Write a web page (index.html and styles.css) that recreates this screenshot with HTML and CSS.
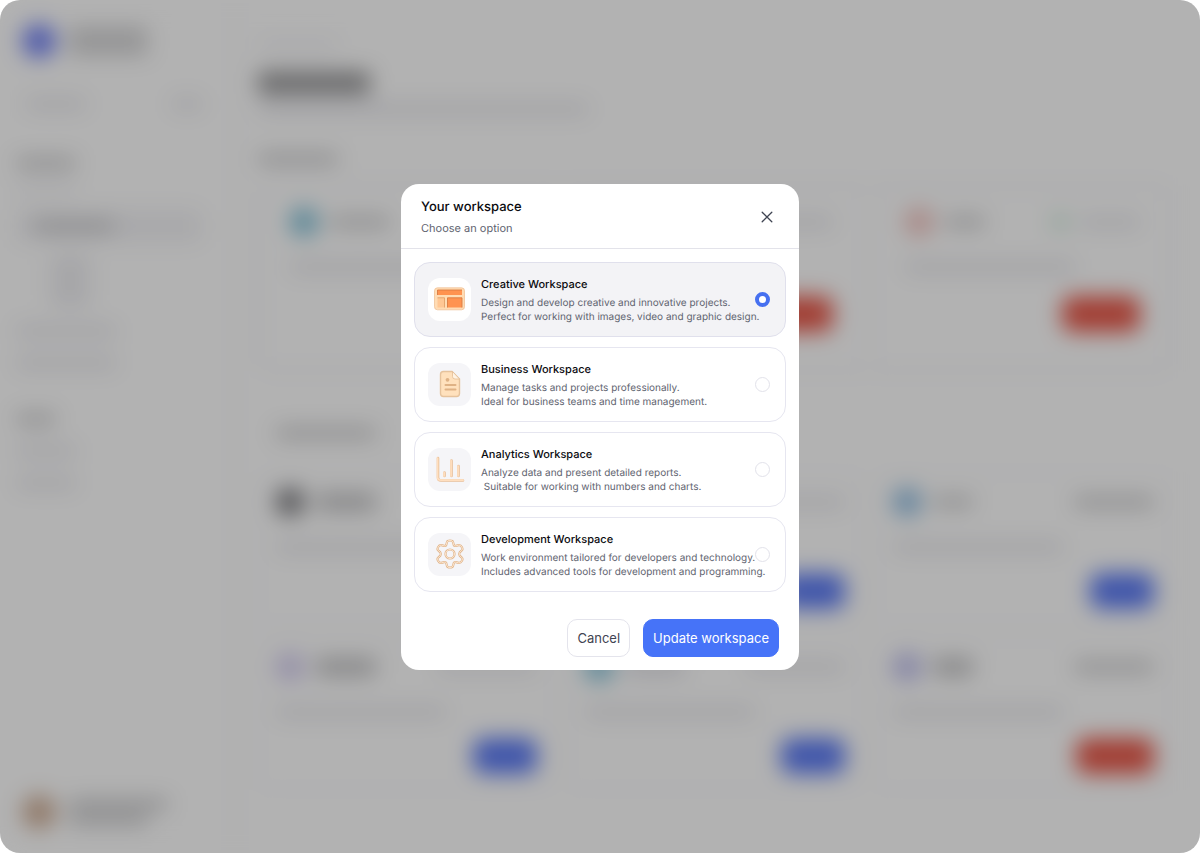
FILE: index.html
```html
<!DOCTYPE html>
<html lang="en">
<head>
<meta charset="utf-8">
<meta name="viewport" content="width=device-width, initial-scale=1">
<title>Your workspace</title>
<link rel="stylesheet" href="styles.css">
</head>
<body>
<div class="screen">
  <div class="app" aria-hidden="true">
    <aside class="side">
      <div class="row brand"><i class="dot blue"></i><div class="lines"><i class="bar dark w80"></i><i class="bar dark w80"></i></div></div>
      <div class="row search"><i class="bar mid w60"></i><i class="bar mid w30"></i></div>
      <div class="nav">
        <i class="bar dark w60"></i>
        <i class="bar soft w60"></i>
        <div class="row active"><i class="bar dark w80"></i></div>
        <div class="sub"><i class="bar mid w40"></i><i class="bar mid w40"></i><i class="bar mid w40"></i></div>
        <i class="bar mid w100"></i>
        <i class="bar mid w100"></i>
      </div>
      <div class="nav more">
        <i class="bar dark w40"></i>
        <i class="bar mid w60"></i>
        <i class="bar mid w60"></i>
      </div>
      <div class="row account"><i class="dot brown"></i><div class="lines"><i class="bar dark w100"></i><i class="bar dark w80"></i></div></div>
    </aside>
    <div class="main">
      <i class="bar soft w80"></i>
      <i class="heading"></i>
      <i class="bar mid w330"></i>
      <i class="bar dark section w80"></i>
      <div class="panel">
        <div class="card tall">
          <div class="row"><i class="chip cyan"></i><i class="bar dark w60"></i><i class="bar mid w80 end"></i></div>
          <i class="bar mid w170"></i><i class="btn red"></i>
        </div>
        <div class="card tall">
          <div class="row"><i class="chip cyan"></i><i class="bar dark w60"></i><i class="bar mid w80 end"></i></div>
          <i class="bar mid w170"></i><i class="btn red"></i>
        </div>
        <div class="card tall">
          <div class="row"><i class="chip rose"></i><i class="bar dark w40"></i><i class="tick end"></i><i class="bar mid w60"></i></div>
          <i class="bar mid w170"></i><i class="btn red"></i>
        </div>
      </div>
      <i class="bar dark tabs w100"></i>
      <div class="cards">
        <div class="card">
          <div class="row"><i class="chip black"></i><i class="bar dark thick w60"></i><i class="bar mid w100 end"></i></div>
          <i class="bar mid w170"></i><i class="btn blue"></i>
        </div>
        <div class="card">
          <div class="row"><i class="chip sky"></i><i class="bar dark thick w60"></i><i class="bar mid w100 end"></i></div>
          <i class="bar mid w170"></i><i class="btn blue"></i>
        </div>
        <div class="card">
          <div class="row"><i class="chip sky"></i><i class="bar dark w40"></i><i class="bar dark w80 end"></i></div>
          <i class="bar mid w170"></i><i class="btn blue"></i>
        </div>
        <div class="card">
          <div class="row"><i class="chip violet"></i><i class="bar dark thick w60"></i><i class="bar mid w100 end"></i></div>
          <i class="bar mid w170"></i><i class="btn blue"></i>
        </div>
        <div class="card">
          <div class="row"><i class="chip cyan"></i><i class="bar mid thick w60"></i><i class="bar mid w100 end"></i></div>
          <i class="bar mid w170"></i><i class="btn blue"></i>
        </div>
        <div class="card">
          <div class="row"><i class="chip indigo"></i><i class="bar dark thick w40"></i><i class="bar dark w80 end"></i></div>
          <i class="bar mid w170"></i><i class="btn red"></i>
        </div>
      </div>
    </div>
  </div>
  <div class="shade"></div>

  <form class="modal" role="dialog" aria-labelledby="modal-title">
    <header class="modal-head">
      <div>
        <h1 class="modal-title" id="modal-title">Your workspace</h1>
        <p class="modal-sub">Choose an option</p>
      </div>
      <button class="close" type="button" aria-label="Close">
        <svg width="12" height="12" viewBox="0 0 12 12" fill="none" stroke="currentColor" stroke-width="1.3" stroke-linecap="round"><path d="M1.2 1.2l9.6 9.6M10.8 1.2l-9.6 9.6"/></svg>
      </button>
    </header>

    <div class="options">
      <label class="option" for="creative">
        <span class="tile">
          <svg width="32" height="24" viewBox="0 0 32 24">
            <rect x=".5" y=".8" width="30" height="22" rx="3" fill="#ffdcb4" stroke="#f0c298" stroke-width=".8"/>
            <path d="M3.500 3H28V8H3.500z" fill="#ff9350"/>
            <path d="M3.500 8V3H28" fill="none" stroke="#d97b42" stroke-width=".9"/>
            <path d="M3.500 10.800H10.500V20.500H3.500z" fill="#ffc794"/>
            <path d="M3.500 10.800H10.500V20.500" fill="none" stroke="#e2a069" stroke-width=".9"/>
            <path d="M13.500 10.800H28V20.500H13.500z" fill="#ff9350"/>
            <path d="M13.500 20.500V10.800H28V20.500" fill="none" stroke="#d97b42" stroke-width=".9"/>
          </svg>
        </span>
        <span class="copy">
          <span class="name">Creative Workspace</span>
          <span class="desc">Design and develop creative and innovative projects.<br>Perfect for working with images, video and graphic design.</span>
        </span>
        <input class="radio" type="radio" name="workspace" id="creative" checked>
      </label>

      <label class="option" for="business">
        <span class="tile">
          <svg width="24" height="28" viewBox="0 0 24 28">
            <path d="M5.500 1.500H14L21.500 9V23.500Q21.500 26.500 18.500 26.500H5.500Q2.500 26.500 2.500 23.500V4.500Q2.500 1.500 5.500 1.500z" fill="#ffe1bd" stroke="#e6c39d" stroke-width="1.400"/>
            <path d="M14.500 1.500V6.500Q14.500 9 17 9H21.500z" fill="#fff3e3" stroke="#e3bd94" stroke-width=".8"/>
            <circle cx="9.500" cy="9.800" r="1.900" fill="#dfb285"/>
            <path d="M7.500 15H17.500M7.500 19.500H17.500" stroke="#dfb285" stroke-width="2" stroke-linecap="round"/>
          </svg>
        </span>
        <span class="copy">
          <span class="name">Business Workspace</span>
          <span class="desc">Manage tasks and projects professionally.<br>Ideal for business teams and time management.</span>
        </span>
        <input class="radio" type="radio" name="workspace" id="business">
      </label>

      <label class="option" for="analytics">
        <span class="tile">
          <svg width="30" height="28" viewBox="0 0 30 28" fill="none" stroke-linecap="round" stroke-linejoin="round">
            <path d="M3 3V22.500Q3 25.500 6 25.500H28M9.500 21V17.500M16.500 21V5.500M23.500 21V11" stroke="#e8bf98" stroke-width="2.600"/>
            <path d="M2.600 3V22.500Q2.600 25.200 6 25.200H28M9.100 21V17.500M16.100 21V5.500M23.100 21V11" stroke="#ffdfc0" stroke-width="1.700"/>
          </svg>
        </span>
        <span class="copy">
          <span class="name">Analytics Workspace</span>
          <span class="desc">Analyze data and present detailed reports.<br>&nbsp;Suitable for working with numbers and charts.</span>
        </span>
        <input class="radio" type="radio" name="workspace" id="analytics">
      </label>

      <label class="option" for="development">
        <span class="tile">
          <svg width="30" height="30" viewBox="0 0 30 30" fill="none" stroke-linejoin="round">
            <g stroke="#dfb48b" stroke-width="2.200">
              <path id="gear" d="M12 3Q12.300 1.500 15 1.500T18 3L18.800 6Q19.300 7.300 20.800 6.900L23.700 6.100Q25.500 5.700 26.800 8T26.900 11.200L24.700 13.400Q23.500 15 24.700 16.600L26.900 18.800Q28.100 19.800 26.800 22T23.700 23.900L20.800 23.100Q19.300 22.700 18.800 24L18 27Q17.700 28.500 15 28.500T12 27L11.200 24Q10.700 22.700 9.200 23.100L6.300 23.900Q4.500 24.300 3.200 22T3.100 18.800L5.300 16.600Q6.500 15 5.300 13.400L3.100 11.200Q1.900 10.200 3.200 8T6.300 6.100L9.200 6.900Q10.700 7.300 11.200 6z"/>
              <circle cx="15" cy="15" r="4.500"/>
            </g>
            <g stroke="#ffebd6" stroke-width=".9">
              <use href="#gear"/>
              <circle cx="15" cy="15" r="4.500"/>
            </g>
          </svg>
        </span>
        <span class="copy">
          <span class="name">Development Workspace</span>
          <span class="desc">Work environment tailored for developers and technology.<br>Includes advanced tools for development and programming.</span>
        </span>
        <input class="radio" type="radio" name="workspace" id="development">
      </label>
    </div>

    <footer class="actions">
      <button class="button" type="button">Cancel</button>
      <button class="button primary" type="submit">Update workspace</button>
    </footer>
  </form>
</div>
</body>
</html>
```
FILE: styles.css
```css
* { box-sizing: border-box; }
body {
  margin: 0;
  background: #fff;
  font-family: Inter, "Liberation Sans", sans-serif;
  text-rendering: geometricPrecision;
}
h1, p { margin: 0; }

.screen {
  display: grid;
  min-height: 100vh;
  border-radius: 20px;
  overflow: hidden;
}
.app, .shade, .modal { grid-area: 1 / 1; }
.shade { background: rgba(0, 0, 0, .3); z-index: 1; }

/* Blurred page behind the dialog */
.app {
  display: grid;
  grid-template-columns: 236px 1fr;
  background: #fff;
  filter: blur(11px);
}
.app i { display: block; flex: none; }
.row { display: flex; align-items: center; gap: 12px; }
.lines { display: flex; flex-direction: column; gap: 6px; }
.bar { height: 10px; border-radius: 4px; }
.thick { height: 18px; }
.soft { background: #f0f0f4; }
.mid { background: #e2e2e8; }
.dark { background: #c2c2c4; }
.w30 { width: 30px; }
.w40 { width: 40px; }
.w60 { width: 60px; }
.w80 { width: 80px; }
.w100 { width: 100px; }
.w170 { width: 170px; }
.w330 { width: 330px; }
.end { margin-left: auto; }

.side {
  display: flex;
  flex-direction: column;
  padding: 24px 32px 24px 16px;
  border-right: 2px solid #f0f0f6;
}
.dot { width: 34px; height: 34px; border-radius: 50%; margin-left: 6px; }
.dot.blue { background: #7080f4; }
.dot.brown { background: #cfae96; }
.search { justify-content: space-between; height: 36px; margin-top: 28px; padding-left: 10px; }
.nav { display: flex; flex-direction: column; gap: 16px; margin-top: 36px; }
.active { height: 32px; padding-left: 18px; border-radius: 8px; background: #f2f2f5; }
.sub { display: flex; flex-direction: column; gap: 8px; padding-left: 34px; }
.nav > .w100 { margin-top: 6px; }
.more { gap: 22px; margin-top: 46px; }
.account { margin-top: auto; }

.main { padding: 40px 28px 0 22px; }
.heading { width: 112px; height: 22px; margin: 22px 0 10px; border-radius: 4px; background: #949496; }
.section { margin: 40px 0 20px; }
.panel, .cards { display: grid; grid-template-columns: repeat(3, 1fr); gap: 12px; }
.panel { border: 2px solid #f2f2f8; border-radius: 16px; }
.tabs { margin: 56px 0 34px 18px; }
.card { display: flex; flex-direction: column; height: 153px; padding: 14px 16px; border: 2px solid #f5f5fa; border-radius: 14px; }
.card > .bar { margin-top: 26px; }
.tall { height: 184px; padding: 20px 28px 36px; }
.chip, .tick { width: 28px; height: 28px; border-radius: 10px; }
.tick { width: 16px; height: 16px; background: #c3e6d2; }
.cyan { background: #85c3da; }
.sky { background: #93bfe3; }
.rose { background: #f3c6c2; }
.black { background: #808084; }
.violet { background: #d6cff2; }
.indigo { background: #c0c0ee; }
.btn { width: 64px; height: 36px; margin: auto 0 0 auto; border-radius: 10px; }
.btn.red { width: 78px; background: #e8594a; }
.btn.blue { background: #5c7bf4; }

/* Dialog */
.modal {
  z-index: 2;
  place-self: center;
  width: min(398px, 100%);
  border-radius: 18px;
  background: #fff;
}
.modal-head {
  display: flex;
  align-items: center;
  justify-content: space-between;
  padding: 13px 19px 11px 20px;
  border-bottom: 1px solid #e3e3ea;
}
.modal-title { font-size: 13px; line-height: 20px; font-weight: 500; color: #0b0b0f; }
.modal-sub { margin-top: 2px; font-size: 11px; line-height: 18px; color: #5f6470; }
.close {
  display: grid;
  place-items: center;
  width: 26px;
  height: 26px;
  padding: 0;
  border: 0;
  background: none;
  color: #3f4452;
}
.options { display: flex; flex-direction: column; gap: 10px; padding: 13px 13px 0; }
.option {
  display: flex;
  align-items: center;
  gap: 10px;
  min-height: 75px;
  padding: 0 15px 0 13px;
  border: 1px solid #e6e6f0;
  border-radius: 16px;
}
.option:has(:checked) { background: #f3f3f6; border-color: #e0e0ec; }
.tile {
  display: grid;
  place-items: center;
  flex: none;
  width: 43px;
  height: 43px;
  border-radius: 12px;
  background: #f5f5f8;
}
.option:has(:checked) .tile { background: #fff; }
.copy { flex: 1; min-width: 0; white-space: nowrap; }
.name { display: block; margin-bottom: 3px; font-size: 11px; line-height: 18px; font-weight: 500; color: #0b0b0f; }
.desc { display: block; font-size: 10px; line-height: 14px; color: #5f6470; }
.radio {
  appearance: none;
  flex: none;
  width: 15px;
  height: 15px;
  margin: 0;
  border: 1px solid #e2e2ea;
  border-radius: 50%;
  background: #fff;
}
.radio:checked { border: 4px solid #4670f0; }
.actions { display: flex; justify-content: flex-end; gap: 13px; padding: 27px 20px 13px; }
.button {
  height: 38px;
  padding: 0 9px;
  border: 1px solid #e4e4ec;
  border-radius: 10px;
  background: #fff;
  font: 400 13px/20px Inter, "Liberation Sans", sans-serif;
  color: #3f4452;
}
.primary { border-color: #4673f8; background: #4673f8; color: #fff; }
```
